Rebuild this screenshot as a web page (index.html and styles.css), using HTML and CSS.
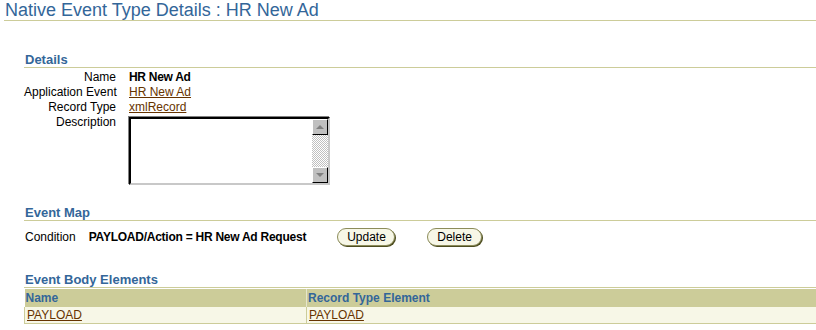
FILE: index.html
```html
<!DOCTYPE html>
<html>
<head>
<meta charset="utf-8">
<link rel="stylesheet" href="styles.css">
</head>
<body>
<div class="title">Native Event Type Details : HR New Ad</div>
<div class="content">
  <div class="section-h details-h">Details</div>
  <div class="form">
    <div class="lbl">Name</div><div class="val bold">HR New Ad</div>
    <div class="lbl">Application Event</div><div class="val"><a href="#">HR New Ad</a></div>
    <div class="lbl">Record Type</div><div class="val"><a href="#">xmlRecord</a></div>
    <div class="lbl">Description</div>
    <div class="val">
      <div class="textarea">
        <div class="ta-body"></div>
        <div class="sb">
          <div class="sb-btn"><svg width="10" height="6" viewBox="0 0 10 6"><polygon points="1,5 5,1 9,5" fill="#808080"/></svg></div>
          <div class="sb-track"></div>
          <div class="sb-btn"><svg width="10" height="6" viewBox="0 0 10 6"><polygon points="1,1 5,5 9,1" fill="#808080"/></svg></div>
        </div>
      </div>
    </div>
  </div>
  <div class="section-h map-h">Event Map</div>
  <div class="cond">
    <span class="cond-lbl">Condition</span>
    <span class="cond-val">PAYLOAD/Action = HR New Ad Request</span>
    <button class="btn btn-update">Update</button>
    <button class="btn btn-delete">Delete</button>
  </div>
  <div class="section-h body-h">Event Body Elements</div>
  <table class="tbl">
    <tr><th class="c1">Name</th><th class="c2">Record Type Element</th></tr>
    <tr><td class="c1"><a href="#">PAYLOAD</a></td><td class="c2"><a href="#">PAYLOAD</a></td></tr>
  </table>
</div>
</body>
</html>
```
FILE: styles.css
```css
html, body {
  margin: 0;
  padding: 0;
  background: #ffffff;
}
body {
  font-family: "Liberation Sans", Arial, sans-serif;
  font-size: 12px;
  color: #000000;
}
a {
  color: #663300;
  text-decoration: underline;
}
.title {
  margin-left: 4px;
  padding-left: 1px;
  font-size: 18px;
  line-height: 20px;
  height: 20px;
  color: #336699;
  border-bottom: 1px solid #cccc99;
}
.content {
  margin-left: 24px;
}
.section-h {
  font-size: 13px;
  font-weight: bold;
  line-height: 15px;
  color: #336699;
  padding-left: 1px;
  border-bottom: 1px solid #cccc99;
}
.details-h {
  margin-top: 31px;
}
.form {
  display: grid;
  grid-template-columns: 92px auto;
  column-gap: 13px;
  justify-content: start;
  align-items: start;
  margin-top: 2px;
}
.lbl {
  text-align: right;
  line-height: 15px;
  white-space: nowrap;
}
.val {
  line-height: 15px;
}
.bold {
  font-weight: bold;
  letter-spacing: -0.3px;
}
.textarea {
  display: flex;
  width: 197px;
  height: 64px;
  margin-top: 2px;
  border-top: 2px solid #000000;
  border-left: 2px solid #000000;
  border-right: 2px solid #c8c8c8;
  border-bottom: 2px solid #c8c8c8;
  box-shadow: -1px -1px 0 #808080;
  background: #ffffff;
}
.ta-body {
  flex: 1;
}
.sb {
  width: 16px;
  display: flex;
  flex-direction: column;
}
.sb-btn {
  height: 14px;
  width: 14px;
  background: #c0c0c0;
  border-top: 1px solid #ffffff;
  border-left: 1px solid #ffffff;
  border-right: 1px solid #000000;
  border-bottom: 1px solid #000000;
  display: flex;
  align-items: center;
  justify-content: center;
}
.sb-track {
  flex: 1;
  background-color: #ffffff;
  background-image: repeating-conic-gradient(#c0c0c0 0 25%, #ffffff 0 50%);
  background-size: 2px 2px;
}
.map-h {
  margin-top: 20px;
}
.cond {
  display: flex;
  align-items: center;
  height: 18px;
  margin-top: 7px;
  padding-left: 1px;
}
.cond-lbl {
  margin-right: 13px;
}
.cond-val {
  font-weight: bold;
  letter-spacing: -0.25px;
}
.btn {
  font-family: "Liberation Sans", Arial, sans-serif;
  font-size: 12px;
  color: #000000;
  background: #f7f7e7;
  border: 1px solid #8c8c5a;
  border-radius: 9px;
  box-shadow: 1px 1px 0 #4d4d20;
  height: 18px;
  line-height: 16px;
  padding: 0 9px;
  margin: 0;
}
.btn-update {
  margin-left: 31px;
  width: 58px;
}
.btn-delete {
  margin-left: 32px;
  width: 55px;
}
.body-h {
  margin-top: 26px;
}
.tbl {
  width: 792px;
  border-collapse: collapse;
  margin-top: 1px;
}
.tbl th {
  background: #cccc99;
  color: #336699;
  font-weight: bold;
  text-align: left;
  height: 18px;
  padding: 0 1px;
  line-height: 15px;
}
.tbl td {
  background: #f7f7e7;
  height: 16px;
  padding: 0 1px 0 2px;
  line-height: 15px;
  border-bottom: 1px solid #cccc99;
}
.tbl td.c1 {
  border-left: 1px solid #cccc99;
}
.tbl .c1 {
  width: 278px;
}
.tbl th.c2 {
  border-left: 1px solid #e6e6cc;
}
.tbl td.c2 {
  border-left: 1px solid #cccc99;
}
```
